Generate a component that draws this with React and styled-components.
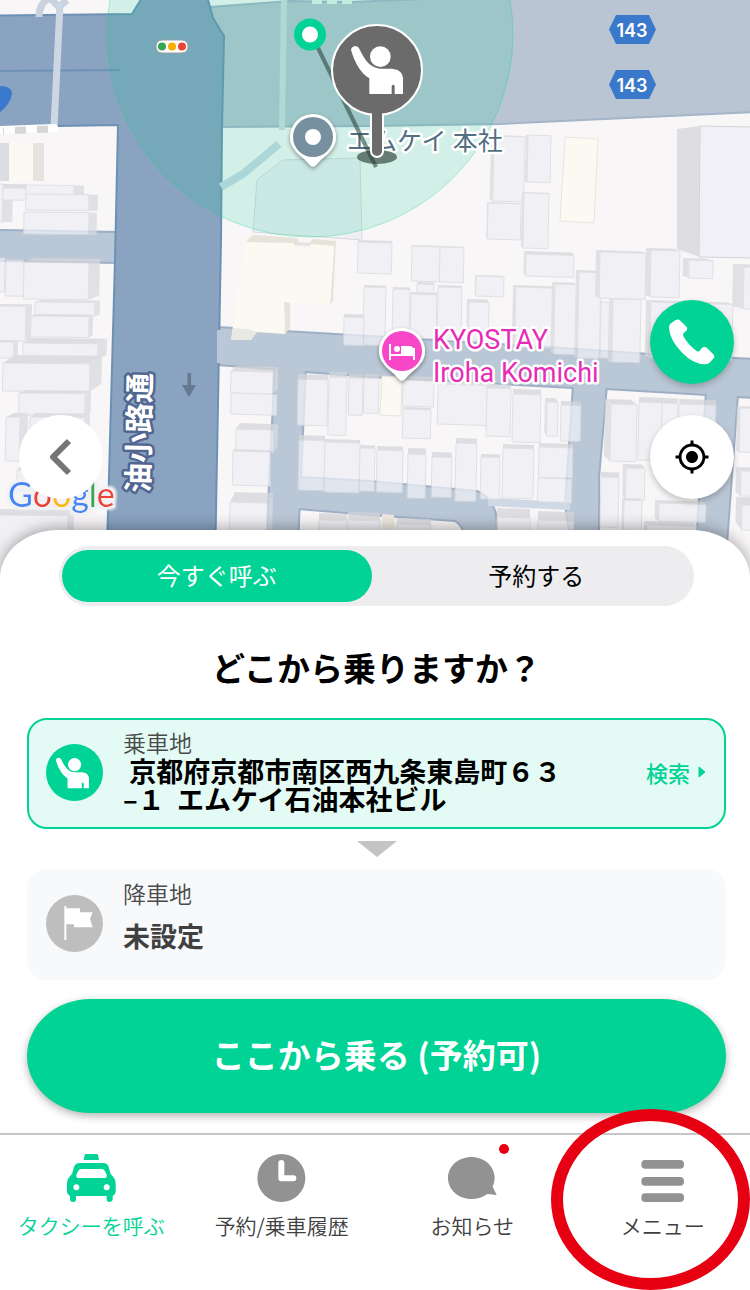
import React, { useState } from "react";
import styled, { createGlobalStyle } from "styled-components";
import { MdMyLocation } from "react-icons/md";

const GREEN = "#00d395";

// [x, y, width, height, side dx, side dy]
const buildings = [
  [-5, 184, 8, 38, 10, 0],
  [3, 188, 24, 12, 0, -4],
  [26, 185, 48, 10, 10, 0],
  [26, 194, 63, 16, 9, 0],
  [24, 212, 65, 22, 8, 0],
  [6, 260, 18, 36, 0, 0],
  [-5, 258, 10, 34, 0, 0],
  [24, 262, 65, 37, 11, -4],
  [35, 302, 60, 14, 5, -2],
  [-5, 306, 31, 35, 6, -2],
  [31, 316, 58, 21, 4, -2],
  [23, 343, 75, 16, 9, -5],
  [-5, 342, 19, 16, 4, -2],
  [3, 363, 87, 28, 12, -8],
  [19, 393, 66, 22, 6, -3],
  [6, 417, 14, 44, 8, -4],
  [30, 417, 55, 40, 5, -4],
  [17, 470, 60, 20, 4, -4],
  [-5, 515, 73, 60, 6, -6],
  [231, 371, 42, 22, 5, -5],
  [231, 393, 46, 21, 0, 0],
  [236, 429, 38, 22, 4, -6],
  [233, 451, 38, 34, 0, -2],
  [230, 502, 38, 60, 5, -10],
  [298, 379, 30, 46, 0, -5],
  [329, 377, 18, 58, 0, -5],
  [349, 378, 14, 37, 0, -4],
  [364, 378, 15, 35, 0, -4],
  [299, 440, 26, 50, 0, -5],
  [325, 442, 35, 50, 0, -3],
  [360, 448, 15, 43, 0, -3],
  [377, 450, 26, 42, 0, -4],
  [319, 520, 28, 30, 0, -7],
  [348, 520, 32, 30, 0, -8],
  [397, 524, 34, 20, 0, -6],
  [358, 242, 34, 31, 0, -2],
  [364, 287, 22, 58, 0, -2],
  [344, 317, 20, 28, 0, -3],
  [393, 289, 17, 50, 0, -2],
  [412, 246, 28, 35, 0, -1],
  [440, 247, 24, 35, 0, -1],
  [417, 284, 17, 10, 0, -2],
  [411, 294, 26, 44, 0, -2],
  [438, 287, 24, 53, 0, -2],
  [469, 302, 20, 38, -2, -3],
  [476, 276, 28, 20, -1, -1],
  [516, 287, 38, 60, -3, -2],
  [555, 284, 22, 70, -3, -2],
  [579, 272, 22, 86, -3, -2],
  [601, 302, 12, 56, 0, 0],
  [613, 299, 28, 63, -4, 0],
  [600, 252, 46, 46, -4, -2],
  [526, 254, 48, 22, -2, -3],
  [651, 250, 29, 47, -5, -2],
  [689, 260, 24, 18, -6, -2],
  [744, 267, 20, 42, -11, -3],
  [651, 302, 82, 56, -5, -2],
  [494, 136, 31, 65, -3, -1],
  [528, 135, 23, 47, -2, 0],
  [524, 193, 25, 55, -2, -1],
  [488, 203, 33, 36, -1, -1],
  [403, 380, 31, 26, 0, -4],
  [403, 409, 28, 29, 0, -2],
  [438, 384, 49, 40, 0, -3],
  [487, 388, 24, 48, 0, -4],
  [513, 394, 28, 48, 0, -5],
  [547, 402, 11, 34, -2, -4],
  [561, 405, 20, 36, 0, -4],
  [539, 447, 34, 30, 0, -4],
  [538, 478, 34, 24, 0, 0],
  [408, 454, 18, 44, 0, -6],
  [432, 457, 20, 40, 0, -5],
  [456, 443, 21, 58, 0, -5],
  [481, 457, 19, 42, 0, -3],
  [503, 448, 31, 50, 0, -4],
  [497, 517, 33, 30, 0, -9],
  [538, 520, 36, 30, 0, -9],
  [611, 404, 26, 57, -6, -5],
  [639, 402, 24, 58, 0, -5],
  [662, 403, 16, 40, 0, -5],
  [679, 404, 37, 40, 0, -5],
  [601, 477, 18, 50, 0, -5],
  [626, 468, 19, 32, -3, -4],
  [624, 500, 18, 30, -2, -2],
  [659, 503, 47, 18, -4, -3],
  [647, 525, 50, 20, -3, -4],
  [740, 408, 20, 44, -3, -2],
  [741, 471, 20, 25, -5, -4],
  [742, 505, 20, 25, -6, -8],
];

const roads = [
  "M-4 231 118 233 118 262 -4 260Z",
  "M217 328 370 337 547 348 650 355 754 360 754 397 737 396 707 394 606 388 573 387 370 376 217 364Z",
  "M276 364 305 366 297 544 267 544Z",
  "M301 478 370 482 477 492Q491 498 495 514L497 544 468 544Q464 524 455 520L370 514 297 508Z",
  "M574 385 606 385 598 478 598 544 572 544 566 505Z",
  "M707 392 737 394 726 544 697 544Z",
];

function Building({ box: [x, y, w, h, dx, dy] }) {
  const tilt = x > 200 ? 0.03 : 0.01;
  const at = (px, py, ox = 0, oy = 0) =>
    `${px - (py - y) * 0.02 + ox},${py + (px - x) * tilt + oy}`;
  const edge = dx > 0 ? x + w : x;
  return (
    <g>
      {dy < 0 && (
        <polygon
          fill="#d6d7db"
          points={[at(x, y), at(x, y, dx, dy), at(x + w, y, dx, dy), at(x + w, y)].join(" ")}
        />
      )}
      {dx !== 0 && (
        <polygon
          fill="#d9dade"
          points={[at(edge, y), at(edge, y, dx, dy), at(edge, y + h, dx, dy), at(edge, y + h)].join(" ")}
        />
      )}
      <polygon
        fill="#eeeff5"
        stroke="#d8d9de"
        points={[at(x, y), at(x + w, y), at(x + w, y + h), at(x, y + h)].join(" ")}
      />
    </g>
  );
}

const PERSON =
  "M79 108C75 96 92 88 101 98C110 114 121 138 136 149C146 158 158 160 170 161H200C224 163 234 175 234 192V237H209V213Q205 206 200 213V237H133V190C108 175 90 145 79 108Z";

function PersonShape() {
  return (
    <g fill="#fff">
      <path d={PERSON} />
      <circle cx="166" cy="125" r="31" />
    </g>
  );
}

function PlacePin({ x, y, color, children }) {
  return (
    <g transform={`translate(${x} ${y})`}>
      <path
        filter="url(#pinShadow)"
        fill="#fff"
        d="M0 -23A23 23 0 0 1 23 0C23 14 9 20 4 27Q0 32 -4 27C-9 20 -23 14 -23 0A23 23 0 0 1 0 -23Z"
      />
      <circle r="20" fill={color} />
      {children}
    </g>
  );
}

function CityMap() {
  return (
    <MapDrawing viewBox="0 0 750 620" preserveAspectRatio="xMidYMin slice" role="img" aria-label="地図">
      <defs>
        <filter id="pinShadow" x="-30%" y="-30%" width="160%" height="160%">
          <feDropShadow dx="0" dy="2" stdDeviation="2" floodOpacity="0.4" />
        </filter>
        <filter id="logoHalo" x="-10%" y="-20%" width="120%" height="140%">
          <feMorphology in="SourceAlpha" operator="dilate" radius="3" result="grown" />
          <feGaussianBlur in="grown" stdDeviation="1" result="soft" />
          <feFlood floodColor="#f1f1f4" />
          <feComposite in2="soft" operator="in" result="halo" />
          <feMerge>
            <feMergeNode in="halo" />
            <feMergeNode in="SourceGraphic" />
          </feMerge>
        </filter>
      </defs>
      <rect width="750" height="620" fill="#f8f6f7" />

      <g fill="none" stroke="#9dafc5" strokeWidth="4">
        {roads.map((d) => (
          <path key={d} d={d} />
        ))}
      </g>
      <g fill="#bac7d6">
        {roads.map((d) => (
          <path key={d} d={d} />
        ))}
      </g>
      <path d="M488 502 570 506" stroke="#cfd9e5" strokeWidth="8" />

      <path
        d="M210 7 290 1 350 2 500 -4 754 -4 754 112 500 124 370 126 218 127Z"
        fill="#b9c5d3"
        stroke="#a3b5c8"
        strokeWidth="2"
      />
      <path
        d="M-4 15.500 132 14 143 -4 207 -4 213 18 224 36 222 127 221 240 214 620 105 620 115 260 118 125 -4 127Z"
        fill="#8aa3c0"
        stroke="#6d91b5"
        strokeWidth="2"
      />
      <path d="M0 71 120 70" stroke="#6d91b5" strokeWidth="2" />
      <path d="M219 330V363" stroke="#bac7d6" strokeWidth="4" />

      <path d="M39 17Q39 4 49 -2M50 -2 60 8M60 6 67 0" fill="none" stroke="#c9d3df" strokeWidth="7" />
      <path d="M60 4 54 128" stroke="#cdd6e3" strokeWidth="7" />
      <path d="M0 130 54 128" stroke="#fff" strokeWidth="8" strokeLinecap="round" />
      <path d="M3 131 50 129" stroke="#d6d6d8" strokeWidth="7" strokeDasharray="11 11" strokeDashoffset="-12" />
      <path d="M284 0 282 130" stroke="#cfdbdf" strokeWidth="6" />
      <path d="M221 187 243 174 279 144" fill="none" stroke="#cbd8e4" strokeWidth="8" />
      <path d="M312 2H354" stroke="#e4f1ec" strokeWidth="4" strokeDasharray="10 5" />

      <path d="M257 180 283 160 360 158 362 240 253 232Z" fill="#eeeef3" stroke="#d8d9de" />
      <g opacity="0.75">
        {buildings.map((box) => (
          <Building key={box.join()} box={box} />
        ))}
      </g>

      <path d="M677 129 700 126 754 127V258L700 257 677 249Z" fill="#dddee2" />
      <path d="M700 126 754 127V258L699 257Z" fill="#f0f0f6" stroke="#d4d5da" />
      <path d="M-4 143H9V181H-4Z" fill="#dcdde0" />
      <path d="M33 143H44V181H33Z" fill="#e6e3df" />
      <path d="M9 143H33V181H9Z" fill="#fcf9f3" />
      <path d="M565 137 598 139 594 223 560 221Z" fill="#fcf9f3" stroke="#e8e5df" />
      <path d="M245 243 253 235 298 238 298 242 309 243 313 239 336 241 333 301 330 305 334 247Z" fill="#e6e3db" />
      <path d="M284 302 290 302 290 328 285 334Z" fill="#e6e3db" />
      <path
        d="M245 242 294 243V248L310 249 311 244 334 246 330 305 284 302 285 334 257 332 251 340 231 340Z"
        fill="#fcf9f3"
      />
      <path d="M257 332 251 340 231 340 233 328 247 329Z" fill="#dadcdc" fillOpacity="0.6" />
      <path d="M382 376 402 377 401 416 380 415Z" fill="#fcf9f3" stroke="#e8e5df" />
      <path d="M382 514 394 515 395 540 382 540Z" fill="#efe9e0" />

      <circle cx="310" cy="34" r="203" fill={GREEN} fillOpacity="0.15" stroke={GREEN} strokeOpacity="0.3" />

      <path d="M-4 86Q12 85 12 94Q10 106 -4 115Z" fill="#3a78cb" />
      <g>
        <rect x="156" y="40" width="32" height="13" rx="6" fill="#fff" stroke="#9c9aa6" />
        <circle cx="162" cy="46.500" r="4" fill="#34a853" />
        <circle cx="172" cy="46.500" r="4" fill="#fbac00" />
        <circle cx="182" cy="46.500" r="4" fill="#ea4335" />
      </g>
      <path d="M187.500 373H191V385H196L189 397 182 385H187.500Z" fill="#66798f" />

      {[30, 85].map((y) => (
        <g key={y}>
          <path
            transform={`translate(609 ${y - 15})`}
            d="M7 0H40L47 14.500 40 29H7L0 14.500Z"
            fill="#3a78cb"
          />
          <ShieldText x="632" y={y + 7}>
            143
          </ShieldText>
        </g>
      ))}

      <RoadName transform="translate(149 493) rotate(-89)">油小路通</RoadName>

      <PlaceName $size={25} x="347" y="150" fill="#536f82">
        エムケイ 本社
      </PlaceName>

      <PlacePin x="313" y="137" color="#76909f">
        <circle r="8" fill="#fff" />
      </PlacePin>
      <path d="M318 48 376 167" stroke="#2c4a40" strokeOpacity="0.6" strokeWidth="4" />
      <circle cx="310" cy="34.500" r="12" fill="#fff" stroke={GREEN} strokeWidth="8" />

      <ellipse cx="377" cy="157" rx="20" ry="7" fill="#2a3f38" fillOpacity="0.65" />
      <path d="M371 110V151A6 6 0 0 0 383 151V110" fill="#6b6b6b" stroke="#fff" strokeWidth="2" />
      <circle cx="377" cy="70" r="45" fill="#6b6b6b" stroke="#fff" strokeWidth="2" />
      <path d="M372 108H382V120H372Z" fill="#6b6b6b" />
      <g transform="translate(325 15) scale(0.3333)">
        <PersonShape />
      </g>

      <PlacePin x="402" y="351" color="#f846c8">
        <g fill="none" stroke="#fff" strokeWidth="2">
          <path d="M-12 -7V9M12 -3V9M-12 4H12" />
        </g>
        <circle cx="-5" cy="-2" r="3" fill="#fff" />
        <path d="M-1 3V-5H7Q12 -5 12 0V3Z" fill="#fff" />
      </PlacePin>
      <PlaceName $size={27} x="433" y="349" fill="#e82bb5">
        KYOSTAY
      </PlaceName>
      <PlaceName $size={27} x="433" y="382" fill="#e82bb5">
        Iroha Komichi
      </PlaceName>

      <LogoText x="8" y="507" filter="url(#logoHalo)">
        <tspan fill="#4285f4">G</tspan>
        <tspan fill="#ea4335">o</tspan>
        <tspan fill="#fbbc05">o</tspan>
        <tspan fill="#4285f4">g</tspan>
        <tspan fill="#34a853">l</tspan>
        <tspan fill="#ea4335">e</tspan>
      </LogoText>
    </MapDrawing>
  );
}

const PhoneIcon = () => (
  <svg width="46" height="46" viewBox="0 0 138 138" aria-hidden="true">
    <path
      fill="currentColor"
      d="M4 14 19 4Q27 -2 34 5L51 22Q58 29 52 35L45 41Q40 46 44 53Q60 80 84 97Q88 99 92 95L98 88Q106 80 114 87L132 105Q139 112 134 118L123 130Q118 136 108 136Q72 136 38 100Q2 62 0 27Q0 18 4 14Z"
    />
  </svg>
);

const TaxiIcon = () => (
  <svg width="49" height="48" viewBox="0 0 147 144" aria-hidden="true">
    <path
      fill="currentColor"
      fillRule="evenodd"
      d="M57 0H89Q92 0 93 3L96 18H50L53 3Q54 0 57 0ZM38 27H108Q122 27 125 39L131 60Q146 74 146 88V114Q146 122 137 126V136Q136 144 127 144Q119 144 119 136V126H27V136Q27 144 18 144Q9 144 9 136V126Q0 122 0 114V88Q0 74 15 60L21 39Q25 27 38 27ZM43 45Q36 45 34 50L28 62Q26 72 36 72H111Q121 72 119 62L113 50Q111 45 104 45ZM28 91A9 9 0 1 0 28 109A9 9 0 1 0 28 91ZM119 91A9 9 0 1 0 119 109A9 9 0 1 0 119 91Z"
    />
  </svg>
);

const ClockIcon = () => (
  <svg width="49" height="48" viewBox="0 0 147 144" aria-hidden="true">
    <circle cx="73" cy="72" r="72" fill="currentColor" />
    <path d="M73 27V73H109" fill="none" stroke="#fff" strokeWidth="18" strokeLinecap="round" strokeLinejoin="round" />
  </svg>
);

const ChatIcon = () => (
  <svg width="49" height="48" viewBox="0 0 147 144" aria-hidden="true">
    <path
      fill="currentColor"
      d="M70 9C109 9 140 37 140 72Q140 86 134 98L146 123L118 120Q98 135 70 135C31 135 0 107 0 72S31 9 70 9Z"
    />
  </svg>
);

const MenuIcon = () => (
  <svg width="49" height="48" viewBox="0 0 147 144" aria-hidden="true">
    <g fill="currentColor">
      <rect x="10" y="18" width="128" height="26" rx="12" />
      <rect x="10" y="69" width="128" height="26" rx="12" />
      <rect x="10" y="118" width="128" height="26" rx="12" />
    </g>
  </svg>
);

const navItems = [
  { label: "タクシーを呼ぶ", icon: <TaxiIcon />, href: "#call", active: true },
  { label: "予約/乗車履歴", icon: <ClockIcon />, href: "#history" },
  { label: "お知らせ", icon: <ChatIcon />, href: "#news", badge: true },
  { label: "メニュー", icon: <MenuIcon />, href: "#menu" },
];

const tabs = ["今すぐ呼ぶ", "予約する"];

function App() {
  const [tab, setTab] = useState(0);

  return (
    <Page>
      <GlobalStyle />
      <MapArea>
        <CityMap />
        <MapControls>
          <ControlColumn>
            <RoundButton $flat aria-label="戻る">
              <svg width="24" height="40" viewBox="0 0 24 40" aria-hidden="true">
                <path d="M20 4 4 20 20 36" fill="none" stroke="#757575" strokeWidth="6" strokeLinejoin="round" />
              </svg>
            </RoundButton>
          </ControlColumn>
          <ControlColumn>
            <RoundButton $primary aria-label="電話">
              <PhoneIcon />
            </RoundButton>
            <RoundButton aria-label="現在地">
              <MdMyLocation size={36} />
            </RoundButton>
          </ControlColumn>
        </MapControls>
      </MapArea>

      <Sheet>
        <Tabs>
          {tabs.map((name, index) => (
            <Tab key={name} $active={tab === index} aria-pressed={tab === index} onClick={() => setTab(index)}>
              {name}
            </Tab>
          ))}
        </Tabs>
        <Title>どこから乗りますか？</Title>

        <PlaceCard $selected>
          <PlaceIcon $selected>
            <svg width="40" height="34" viewBox="76 80 184 160" aria-hidden="true">
              <PersonShape />
            </svg>
          </PlaceIcon>
          <PlaceBody>
            <PlaceLabel>乗車地</PlaceLabel>
            <PlaceValue $selected>
              <span>
                &nbsp;京都府京都市南区西九条東島町６３
                <br />
                –１&nbsp; エムケイ石油本社ビル
              </span>
            </PlaceValue>
          </PlaceBody>
          <SearchButton>
            検索
            <svg width="8" height="12" viewBox="0 0 8 12" aria-hidden="true">
              <path d="M1 1 7 6 1 11Z" fill="currentColor" stroke="currentColor" strokeLinejoin="round" />
            </svg>
          </SearchButton>
        </PlaceCard>

        <DownArrow width="40" height="16" viewBox="0 0 40 16" aria-hidden="true">
          <path d="M0 0H40L20 16Z" fill="#c4c4c4" />
        </DownArrow>

        <PlaceCard>
          <PlaceIcon>
            <svg width="36" height="36" viewBox="171 620 108 108" aria-hidden="true">
              <path
                fill="#fff"
                d="M193 624Q196 620 199 624V630H240V642H278L270 662 278 687H222V678H199V724Q196 728 193 724Z"
              />
            </svg>
          </PlaceIcon>
          <PlaceBody>
            <PlaceLabel>降車地</PlaceLabel>
            <PlaceValue>未設定</PlaceValue>
          </PlaceBody>
        </PlaceCard>

        <RideButton>ここから乗る (予約可)</RideButton>
      </Sheet>

      <BottomNav>
        <NavList>
          {navItems.map(({ label, icon, href, active, badge }) => (
            <NavLink key={label} href={href} $active={active}>
              <NavIcon $active={active}>
                {icon}
                {badge && <Badge />}
              </NavIcon>
              {label}
            </NavLink>
          ))}
        </NavList>
        <MenuHighlight />
      </BottomNav>
    </Page>
  );
}

export default App;

const GlobalStyle = createGlobalStyle`
  *, *::before, *::after {
    box-sizing: border-box;
  }
  body {
    margin: 0;
    background: #fff;
    font-family: "Noto Sans CJK JP", sans-serif;
    color: #000;
  }
  button {
    border: 0;
    padding: 0;
    font: inherit;
    cursor: pointer;
  }
`;

const Page = styled.div`
  display: flex;
  flex-direction: column;
  min-height: 100vh;
  overflow: hidden;
`;

const MapArea = styled.div`
  position: relative;
  height: 620px;
  margin-bottom: -90px;
`;

const MapDrawing = styled.svg`
  display: block;
  width: 100%;
  height: 100%;
`;

const ShieldText = styled.text`
  fill: #fff;
  font: 600 18px Inter, sans-serif;
  text-anchor: middle;
`;

const RoadName = styled.text`
  font-size: 30px;
  font-weight: 700;
  fill: #fff;
  stroke: #50658f;
  stroke-width: 5px;
  stroke-linejoin: round;
  paint-order: stroke;
`;

const PlaceName = styled.text`
  font-family: Roboto, "Noto Sans CJK JP", sans-serif;
  font-size: ${({ $size }) => $size}px;
  font-weight: 400;
  stroke: #fff;
  stroke-width: 5px;
  stroke-linejoin: round;
  paint-order: stroke;
`;

const LogoText = styled.text`
  font: 400 34px Lato, sans-serif;
`;

const MapControls = styled.div`
  position: absolute;
  inset: 0;
  display: flex;
  align-items: flex-end;
  justify-content: space-between;
  padding: 0 16px 121px 19px;
`;

const ControlColumn = styled.div`
  display: flex;
  flex-direction: column;
  gap: 31px;
`;

const RoundButton = styled.button`
  display: flex;
  align-items: center;
  justify-content: center;
  width: 84px;
  height: 84px;
  border-radius: 50%;
  background: ${({ $primary }) => ($primary ? GREEN : "#fff")};
  color: ${({ $primary }) => ($primary ? "#fff" : "#000")};
  box-shadow: ${({ $flat }) => ($flat ? "none" : "0 3px 6px rgba(0, 0, 0, 0.22)")};
`;

const Sheet = styled.main`
  position: relative;
  padding: 16px 24px 20px 27px;
  border-radius: 58px 58px 0 0 / 48px 48px 0 0;
  background: #fff;
  box-shadow: 0 -3px 14px rgba(0, 0, 0, 0.3);
`;

const Tabs = styled.div`
  display: grid;
  grid-template-columns: 1fr 1fr;
  gap: 10px;
  height: 60px;
  margin: 0 32px;
  padding: 4px 3px;
  border-radius: 30px;
  background: #ededef;
`;

const Tab = styled.button`
  border-radius: 26px;
  background: ${({ $active }) => ($active ? GREEN : "transparent")};
  color: ${({ $active }) => ($active ? "#fff" : "#000")};
  font-size: 24px;
  line-height: 50px;
  padding-bottom: 2px;
`;

const Title = styled.h1`
  margin: 37px 0 27px;
  font-size: 33px;
  font-weight: 700;
  line-height: 48px;
  text-align: center;
`;

const PlaceCard = styled.section`
  display: flex;
  align-items: center;
  gap: 20px;
  padding: 11px 18px 14px 17px;
  border: 2px solid ${({ $selected }) => ($selected ? GREEN : "#f8f9fb")};
  border-radius: 20px;
  background: ${({ $selected }) => ($selected ? "#e4faf4" : "#f8f9fb")};
`;

const PlaceIcon = styled.div`
  display: flex;
  flex: none;
  align-items: center;
  justify-content: center;
  width: 57px;
  height: 57px;
  border-radius: 50%;
  background: ${({ $selected }) => ($selected ? GREEN : "#bebebe")};
`;

const PlaceBody = styled.div`
  flex: 1;
`;

const PlaceLabel = styled.div`
  color: #4a4a4a;
  font-size: 23px;
  font-weight: 350;
  line-height: 22px;
`;

const PlaceValue = styled.div`
  display: flex;
  align-items: center;
  min-height: 56px;
  margin-top: 4px;
  color: ${({ $selected }) => ($selected ? "#000" : "#404040")};
  font-size: 27px;
  font-weight: 700;
  line-height: 28px;
`;

const SearchButton = styled.button`
  display: flex;
  align-items: center;
  gap: 8px;
  background: none;
  color: ${GREEN};
  font-size: 22px;
  font-weight: 500;
`;

const DownArrow = styled.svg`
  display: block;
  margin: 12px auto;
`;

const RideButton = styled.button`
  display: block;
  width: 100%;
  height: 114px;
  margin-top: 19px;
  padding-bottom: 4px;
  border-radius: 64px / 57px;
  background: ${GREEN};
  box-shadow: 0 3px 8px rgba(0, 0, 0, 0.3);
  color: #fff;
  font-size: 33px;
  font-weight: 700;
`;

const BottomNav = styled.nav`
  position: relative;
  border-top: 2px solid #c6c6c6;
  background: #fff;
`;

const NavList = styled.div`
  display: grid;
  grid-template-columns: repeat(4, 1fr);
  margin: 0 -8px 0 -4px;
  padding: 19px 0 50px;
`;

const NavLink = styled.a`
  display: flex;
  flex-direction: column;
  align-items: center;
  gap: 8px;
  color: ${({ $active }) => ($active ? GREEN : "#404040")};
  font-size: 21px;
  font-weight: 350;
  line-height: 30px;
  text-decoration: none;
  white-space: nowrap;
`;

const NavIcon = styled.span`
  position: relative;
  display: flex;
  height: 48px;
  color: ${({ $active }) => ($active ? GREEN : "#929292")};
`;

const Badge = styled.span`
  position: absolute;
  top: -10px;
  right: -12px;
  width: 10px;
  height: 10px;
  border-radius: 50%;
  background: #e60012;
`;

const MenuHighlight = styled.div`
  position: absolute;
  top: -26px;
  right: 0;
  width: 199px;
  height: 181px;
  border: 12px solid #e60012;
  border-radius: 50%;
  pointer-events: none;
`;
